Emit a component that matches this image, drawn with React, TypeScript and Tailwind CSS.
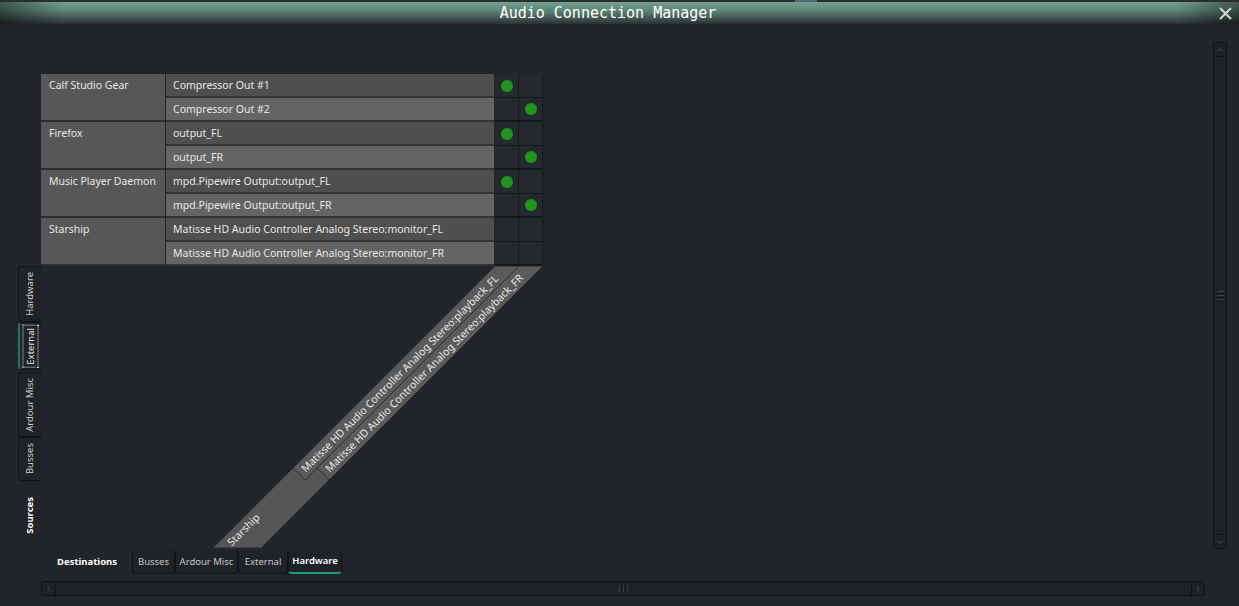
import React from 'react';

type Group = { name: string; ports: string[]; links: number[] };

const groups: Group[] = [
  { name: 'Calf Studio Gear', ports: ['Compressor Out #1', 'Compressor Out #2'], links: [0, 1] },
  { name: 'Firefox', ports: ['output_FL', 'output_FR'], links: [0, 1] },
  { name: 'Music Player Daemon', ports: ['mpd.Pipewire Output:output_FL', 'mpd.Pipewire Output:output_FR'], links: [0, 1] },
  {
    name: 'Starship',
    ports: ['Matisse HD Audio Controller Analog Stereo:monitor_FL', 'Matisse HD Audio Controller Analog Stereo:monitor_FR'],
    links: [-1, -1],
  },
];

const TitleBar = () => (
  <div className="h-[24px] flex flex-col bg-[linear-gradient(to_right,rgba(0,0,0,0.45),transparent_5%,transparent_95%,rgba(0,0,0,0.45)),linear-gradient(to_bottom,#7ba696,#5c8476_45%,#2b3134)]">
    <div className="h-[2px] bg-[#2b2e2e] flex">
      <div className="ml-[795px] w-[22px] bg-[#56677a]" />
    </div>
    <div className="flex-1 flex">
      <div className="flex-1 flex items-center justify-center font-['DejaVu_Sans_Mono',monospace] text-[15px] text-white leading-none">
        Audio Connection Manager
      </div>
      <div className="w-[23px] flex items-center pl-[3px]">
        <svg width="13" height="13" viewBox="0 0 13 13">
          <path d="M1 1 L12 12 M12 1 L1 12" stroke="#d6d6d6" strokeWidth="2" />
        </svg>
      </div>
    </div>
  </div>
);

const SideTab = ({ label, h, active }: { label: string; h: string; active?: boolean }) => (
  <div
    className={`${h} w-[23px] border border-r-0 border-[#111316] rounded-l-[4px] bg-[#1f2226] flex items-center justify-center ${
      active ? 'border-l-2 border-l-[#1f7a5c]' : ''
    }`}
  >
    <span
      className={`[writing-mode:vertical-rl] rotate-180 text-[9.5px] leading-none ${
        active ? 'text-[#e8e8e8] outline-1 outline-dotted outline-[#e8e8e8] outline-offset-[2px]' : 'text-[#cfcfcf]'
      }`}
    >
      {label}
    </span>
  </div>
);

const SideTabs = () => (
  <div className="w-[41px] flex flex-col pl-[18px] pt-[242px]">
    <SideTab label="Hardware" h="h-[56px]" />
    <SideTab label="External" h="h-[48px]" active />
    <div className="h-[2px]" />
    <SideTab label="Ardour Misc" h="h-[65px]" />
    <SideTab label="Busses" h="h-[44px]" />
    <div className="h-[68px] w-[23px] flex items-center justify-center">
      <span className="[writing-mode:vertical-rl] rotate-180 text-[9.5px] font-bold text-white leading-none">Sources</span>
    </div>
  </div>
);

const Matrix = () => (
  <div className="flex flex-col">
    {groups.map((g) => (
      <div key={g.name} className="flex">
        <div className="w-[124px] h-[48px] bg-[#575757] border-b-2 border-[#2e2e2e] pl-[8px] text-[10.5px] leading-[22px] text-[#e6e6e6]">
          {g.name}
        </div>
        <div className="ml-[1px] w-[328px] flex flex-col">
          {g.ports.map((p, i) => (
            <div
              key={p}
              className={`h-[24px] border-b-2 border-[#333333] pl-[7px] text-[10.5px] leading-[22px] text-[#e6e6e6] ${
                i === 0 ? 'bg-[#4f4f4f]' : 'bg-[#646464]'
              }`}
            >
              {p}
            </div>
          ))}
        </div>
        <div className="ml-[1px] w-[48px] flex flex-col">
          {g.ports.map((p, i) => (
            <div key={p} className={`h-[24px] flex border-[#15171a] ${i === 1 ? 'border-b-2' : 'border-b'}`}>
              {[0, 1].map((c) => (
                <div key={c} className="w-[24px] bg-[#25282c] border-r border-[#15171a] flex items-center justify-center">
                  {g.links[i] === c && <div className="w-[12px] h-[12px] rounded-full bg-[#1b981b]" />}
                </div>
              ))}
            </div>
          ))}
        </div>
      </div>
    ))}
  </div>
);

const Diagonal = () => (
  <svg width="502" height="283" viewBox="41 266 502 283" className="block">
    <polygon points="293,468 305,480 317,468 329,480 261,548 213,548" fill="#555555" stroke="#2c2e30" strokeWidth="1" />
    <polygon points="495,266 519,266 305,480 293,468" fill="#5a5a5a" stroke="#2c2e30" strokeWidth="1" />
    <polygon points="519,266 543,266 329,480 317,468" fill="#5a5a5a" stroke="#2c2e30" strokeWidth="1" />
    <g fontFamily="Noto Sans, sans-serif" fontSize="10.5" fill="#e8e8e8" dominantBaseline="central">
      <text x="303" y="470" transform="rotate(-45 303 470)">
        Matisse HD Audio Controller Analog Stereo:playback_FL
      </text>
      <text x="327" y="470" transform="rotate(-45 327 470)">
        Matisse HD Audio Controller Analog Stereo:playback_FR
      </text>
      <text x="229" y="544" transform="rotate(-45 229 544)">
        Starship
      </text>
    </g>
  </svg>
);

const BottomTab = ({ label, w, active }: { label: string; w: string; active?: boolean }) => (
  <div
    className={`${w} h-[23px] border border-t-0 border-[#111316] rounded-b-[4px] bg-[#1f2226] flex items-center justify-center text-[9.5px] ${
      active ? 'border-b-2 border-b-[#10a37a] text-white font-semibold' : 'text-[#c8c8c8]'
    }`}
  >
    {label}
  </div>
);

const BottomTabs = () => (
  <div className="h-[25px] flex pt-[2px]">
    <div className="w-[132px] pl-[57px] h-[23px] flex items-center text-[9.5px] font-bold text-white">Destinations</div>
    <BottomTab label="Busses" w="w-[43px]" />
    <BottomTab label="Ardour Misc" w="w-[63px]" />
    <BottomTab label="External" w="w-[50px]" />
    <BottomTab label="Hardware" w="w-[54px]" active />
  </div>
);

const HScroll = () => (
  <div className="ml-[41px] mt-[7px] w-[1164px] h-[15px] flex border border-[#0f1113] rounded-[3px] bg-[#1d2024]">
    <div className="w-[14px] border-r border-[#0f1113] flex items-center justify-center">
      <svg width="4" height="6" viewBox="0 0 4 6">
        <path d="M3 0.5 L0.8 3 L3 5.5" fill="none" stroke="#454950" strokeWidth="1" />
      </svg>
    </div>
    <div className="flex-1 flex items-center justify-center gap-[1px]">
      <div className="w-[1px] h-[7px] bg-[#3b3f45]" />
      <div className="w-[1px] h-[7px] bg-[#111316]" />
      <div className="w-[1px] h-[7px] bg-[#3b3f45]" />
      <div className="w-[1px] h-[7px] bg-[#111316]" />
      <div className="w-[1px] h-[7px] bg-[#3b3f45]" />
    </div>
    <div className="w-[13px] border-l border-[#0f1113] flex items-center justify-center">
      <svg width="4" height="6" viewBox="0 0 4 6">
        <path d="M1 0.5 L3.2 3 L1 5.5" fill="none" stroke="#454950" strokeWidth="1" />
      </svg>
    </div>
  </div>
);

const VScroll = () => (
  <div className="w-[14px] h-[507px] flex flex-col border border-[#0f1113] rounded-[3px] bg-[#1d2024]">
    <div className="h-[14px] border-b border-[#0f1113] flex items-center justify-center">
      <svg width="6" height="4" viewBox="0 0 6 4">
        <path d="M0.5 3 L3 0.8 L5.5 3" fill="none" stroke="#454950" strokeWidth="1" />
      </svg>
    </div>
    <div className="flex-1 flex flex-col items-center justify-center gap-[1px]">
      <div className="h-[1px] w-[7px] bg-[#3b3f45]" />
      <div className="h-[1px] w-[7px] bg-[#111316]" />
      <div className="h-[1px] w-[7px] bg-[#3b3f45]" />
      <div className="h-[1px] w-[7px] bg-[#111316]" />
      <div className="h-[1px] w-[7px] bg-[#3b3f45]" />
    </div>
    <div className="h-[14px] border-t border-[#0f1113] flex items-center justify-center">
      <svg width="6" height="4" viewBox="0 0 6 4">
        <path d="M0.5 1 L3 3.2 L5.5 1" fill="none" stroke="#454950" strokeWidth="1" />
      </svg>
    </div>
  </div>
);

export default function App() {
  return (
    <div className="w-[1239px] h-[606px] overflow-hidden bg-[#212428] font-['Noto_Sans',sans-serif] text-[#e4e4e4] flex flex-col">
      <TitleBar />
      <div className="flex flex-1">
        <div className="w-[1213px] flex flex-col">
          <div className="flex h-[525px]">
            <SideTabs />
            <div className="flex flex-col pt-[50px]">
              <Matrix />
              <Diagonal />
            </div>
          </div>
          <BottomTabs />
          <HScroll />
        </div>
        <div className="pt-[18px]">
          <VScroll />
        </div>
      </div>
    </div>
  );
}
